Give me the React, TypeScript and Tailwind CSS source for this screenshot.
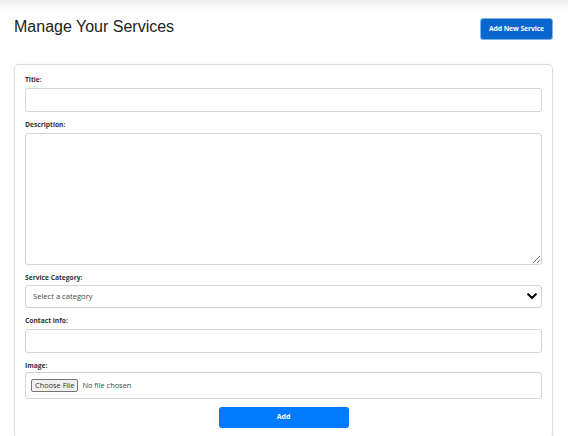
import { useState } from "react";

const categories = ["Cleaning", "Repairs", "Tutoring", "Delivery"];

function Field({ label, children, gap = "mb-[3px]" }: { label: string; children: React.ReactNode; gap?: string }) {
  return (
    <div className="mb-[8px]">
      <label className={`block text-[6.7px] leading-[10px] font-bold text-[#333] ${gap}`}>{label}</label>
      {children}
    </div>
  );
}

export default function App() {
  const [title, setTitle] = useState("");
  const [description, setDescription] = useState("");
  const [category, setCategory] = useState("");
  const [contact, setContact] = useState("");

  return (
    <main className="w-[568px] h-[436px] overflow-hidden bg-white font-['Open_Sans',sans-serif]">
      <div className="h-[10px] bg-gradient-to-b from-[#ececec] to-white" />
      <div className="flex justify-between items-start pl-[14px] pr-[15px] pt-[6px]">
        <h1 className="font-['Liberation_Sans',Arial,sans-serif] text-[16px] leading-[20px] text-[#222] mt-[1px]">
          Manage Your Services
        </h1>
        <button className="mt-[2px] h-[22px] px-[8px] rounded-[3px] bg-[#0a66cf] border border-[#7fb5f0] text-white text-[6.8px] font-bold tracking-[-0.1px]">
          Add New Service
        </button>
      </div>
      <div className="ml-[14px] mr-[15px] mt-[24px] border border-[#dcdcdc] rounded-[5px] shadow-[0_0_2px_rgba(0,0,0,0.08)] px-[10px] pt-[10px] pb-[10px]">
        <Field label="Title:">
          <input
            value={title}
            onChange={(e) => setTitle(e.target.value)}
            className="block w-full h-[24px] border border-[#d4d4d4] rounded-[3px] px-[8px] text-[8px] outline-none"
          />
        </Field>
        <Field label="Description:">
          <textarea
            value={description}
            onChange={(e) => setDescription(e.target.value)}
            className="block w-full h-[132px] border border-[#d4d4d4] rounded-[3px] px-[8px] py-[4px] text-[8px] outline-none"
          />
        </Field>
        <Field label="Service Category:" gap="mb-[2px]">
          <div className="relative">
            <select
              value={category}
              onChange={(e) => setCategory(e.target.value)}
              className="block w-full h-[23px] appearance-none border border-[#d4d4d4] rounded-[3px] pl-[7px] text-[7.6px] text-[#444] bg-white outline-none"
            >
              <option value="">Select a category</option>
              {categories.map((c) => (
                <option key={c} value={c}>
                  {c}
                </option>
              ))}
            </select>
            <svg
              className="absolute right-[5px] top-[8px] pointer-events-none"
              width="10"
              height="7"
              viewBox="0 0 10 7"
              fill="none"
            >
              <path d="M1.2 1.2 L5 5 L8.8 1.2" stroke="#111" strokeWidth="2.2" strokeLinecap="round" strokeLinejoin="round" />
            </svg>
          </div>
        </Field>
        <Field label="Contact info:">
          <input
            value={contact}
            onChange={(e) => setContact(e.target.value)}
            className="block w-full h-[24px] border border-[#d4d4d4] rounded-[3px] px-[8px] text-[8px] outline-none"
          />
        </Field>
        <div className="mb-[8px]">
          <label className="block text-[6.7px] leading-[10px] font-bold text-[#333] mb-[1px]">Image:</label>
          <label className="flex items-center w-full h-[27px] border border-[#d4d4d4] rounded-[3px] px-[5px] cursor-pointer">
            <input type="file" className="hidden" />
            <span className="h-[13px] leading-[11px] px-[3px] border border-[#767676] rounded-[2px] bg-[#efefef] text-[7.4px] text-[#333]">
              Choose File
            </span>
            <span className="ml-[4px] text-[7.4px] text-[#444]">No file chosen</span>
          </label>
        </div>
        <div className="flex justify-center">
          <button className="w-[130px] h-[21px] rounded-[3px] bg-[#007bff] text-white text-[7px] font-bold">
            Add
          </button>
        </div>
      </div>
    </main>
  );
}
